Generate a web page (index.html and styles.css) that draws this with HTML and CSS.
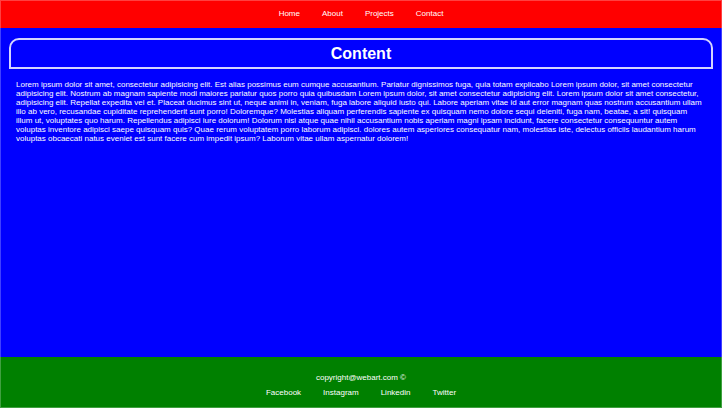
FILE: index.html
```html
<!DOCTYPE html>
<html lang="en">
<head>
<meta charset="utf-8">
<title>Content</title>
<link rel="stylesheet" href="styles.css">
</head>
<body>
<header class="header">
  <nav class="links">
    <a href="#">Home</a>
    <a href="#">About</a>
    <a href="#">Projects</a>
    <a href="#">Contact</a>
  </nav>
</header>
<main class="content">
  <h1 class="title">Content</h1>
  <p class="text">Lorem ipsum dolor sit amet, consectetur adipisicing elit. Est alias possimus eum cumque accusantium. Pariatur dignissimos fuga, quia totam explicabo Lorem ipsum dolor, sit amet consectetur adipisicing elit. Nostrum ab magnam sapiente modi maiores pariatur quos porro quia quibusdam Lorem ipsum dolor, sit amet consectetur adipisicing elit. Lorem ipsum dolor sit amet consectetur, adipisicing elit. Repellat expedita vel et. Placeat ducimus sint ut, neque animi in, veniam, fuga labore aliquid iusto qui. Labore aperiam vitae id aut error magnam quas nostrum accusantium ullam illo ab vero, recusandae cupiditate reprehenderit sunt porro! Doloremque? Molestias aliquam perferendis sapiente ex quisquam nemo dolore sequi deleniti, fuga nam, beatae, a sit! quisquam illum ut, voluptates quo harum. Repellendus adipisci iure dolorum! Dolorum nisi atque quae nihil accusantium nobis aperiam magni ipsam incidunt, facere consectetur consequuntur autem voluptas inventore adipisci saepe quisquam quis? Quae rerum voluptatem porro laborum adipisci. dolores autem asperiores consequatur nam, molestias iste, delectus officiis laudantium harum voluptas obcaecati natus eveniet est sunt facere cum impedit ipsum? Laborum vitae ullam aspernatur dolorem!</p>
</main>
<footer class="footer">
  <p class="copyright">copyright@webart.com ©</p>
  <nav class="links">
    <a href="#">Facebook</a>
    <a href="#">Instagram</a>
    <a href="#">Linkedin</a>
    <a href="#">Twitter</a>
  </nav>
</footer>
</body>
</html>
```
FILE: styles.css
```css
* {
  box-sizing: border-box;
  margin: 0;
  padding: 0;
}

body {
  display: flex;
  flex-direction: column;
  min-height: 100vh;
  font: 8px/9px "Liberation Sans", Arial, sans-serif;
  color: white;
  background: white;
}

.header,
.content,
.footer {
  border: 0 solid rgba(255, 255, 255, 0.25);
  border-width: 0 1px;
}

.header {
  padding: 8px 0 10px;
  border-top-width: 1px;
  background: red;
}

.links {
  display: flex;
  justify-content: center;
  gap: 22px;
}

.links a {
  color: white;
  text-decoration: none;
}

.content {
  flex: 1;
  padding: 10px 8px 0;
  background: blue;
}

.title {
  padding: 4px 0;
  border: 2px solid #d4d4ff;
  border-radius: 10px 10px 0 0;
  font-size: 16px;
  line-height: 19px;
  text-align: center;
}

.text {
  padding: 11px 8px 10px 7px;
}

.footer {
  padding: 16px 0 10px;
  margin-bottom: 2px;
  border-bottom-width: 1px;
  background: green;
}

.copyright {
  margin-bottom: 6px;
  text-align: center;
}
```
